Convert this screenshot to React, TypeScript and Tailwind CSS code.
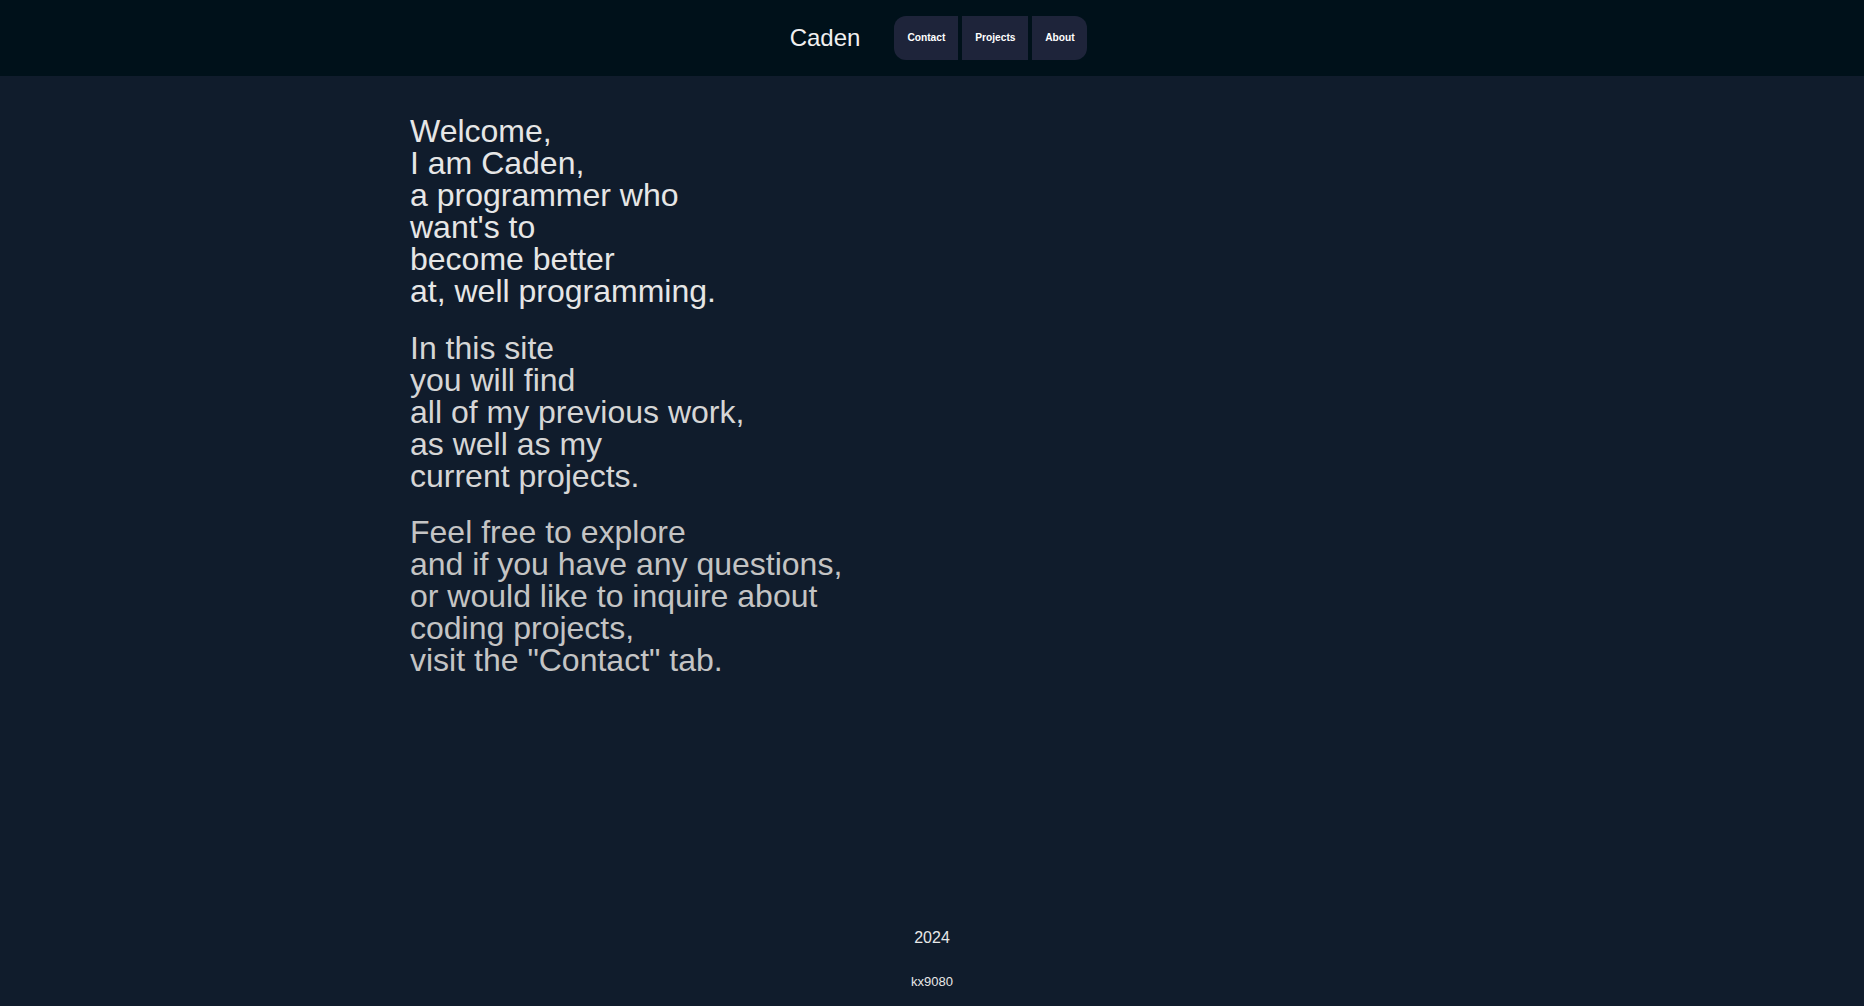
export default function App() {
  const navItems = ['Contact', 'Projects', 'About'];

  return (
    <div className="min-h-screen flex flex-col bg-[#101c2c] font-['Liberation_Sans',Arial,sans-serif]">
      {/* Header */}
      <header className="h-[76px] bg-[#00111a] flex items-center justify-center pl-[13px]">
        <div className="text-[24px] text-[#f0f0f0] mr-[34px]">Caden</div>
        <nav className="flex gap-[4px] h-[44px]">
          {navItems.map((item, i) => (
            <a
              key={item}
              href="#"
              className={`flex items-center justify-center bg-[#1e243a] text-white font-bold text-[10.2px] ${
                i === 0 ? 'w-[64px] rounded-l-[12px]' : i === 1 ? 'w-[66px]' : 'w-[55px] rounded-r-[12px]'
              }`}
            >
              {item}
            </a>
          ))}
        </nav>
      </header>

      {/* Intro text */}
      <main className="flex-1 pl-[410px] pt-[39px] text-[32px] leading-[32px]">
        <p className="text-[#e6e6e6] mb-[25px]">
          Welcome,<br />
          I am Caden,<br />
          a programmer who<br />
          want's to<br />
          become better<br />
          at, well programming.
        </p>
        <p className="text-[#d6d6d6] mb-[24px]">
          In this site<br />
          you will find<br />
          all of my previous work,<br />
          as well as my<br />
          current projects.
        </p>
        <p className="text-[#c4c4c4]">
          Feel free to explore<br />
          and if you have any questions,<br />
          or would like to inquire about<br />
          coding projects,<br />
          visit the "Contact" tab.
        </p>
      </main>

      {/* Footer */}
      <footer className="flex flex-col items-center text-[#e8e8e8]">
        <p className="text-[16px] leading-[18px]">2024</p>
        <p className="text-[13px] leading-[15px] mt-[27px] mb-[17px]">kx9080</p>
      </footer>
    </div>
  );
}
